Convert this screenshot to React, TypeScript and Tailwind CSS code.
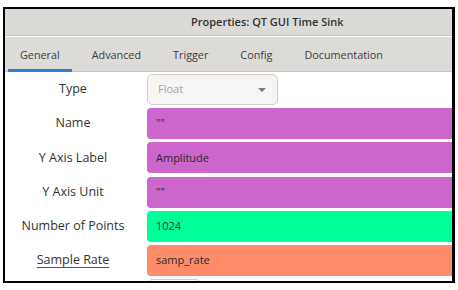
import { useState } from 'react';

type Row = {
  label: string;
  value: string;
  color?: string;
  select?: boolean;
  underline?: boolean;
};

const rows: Row[] = [
  { label: 'Type', value: 'Float', select: true },
  { label: 'Name', value: '""', color: 'bg-[#cc66cc]' },
  { label: 'Y Axis Label', value: 'Amplitude', color: 'bg-[#cc66cc]' },
  { label: 'Y Axis Unit', value: '""', color: 'bg-[#cc66cc]' },
  { label: 'Number of Points', value: '1024', color: 'bg-[#00ff99]' },
  { label: 'Sample Rate', value: 'samp_rate', color: 'bg-[#ff8c69]', underline: true },
];

const tabs = ['General', 'Advanced', 'Trigger', 'Config', 'Documentation'];

export default function App() {
  const [active, setActive] = useState(0);

  return (
    <div className="w-[458px] h-[290px] bg-white font-['Open_Sans',sans-serif] text-[#2e3436] overflow-hidden">
      <div className="ml-[3px] mt-[7px] w-[452px] h-[276px] border-2 border-r-[3px] border-black overflow-hidden flex flex-col">
        <div className="h-[27px] shrink-0 bg-[#dcdad7] border-b border-[#c6c3bf] flex items-center pl-[186px] text-[11px] font-semibold text-[#2e3436]">
          Properties: QT GUI Time Sink
        </div>
        <div className="h-px shrink-0 bg-white" />
        <div className="h-[35px] shrink-0 bg-[#dddbd8] border-b border-[#cac7c3] flex pl-[-1px]">
          {tabs.map((t, i) => (
            <button
              key={t}
              onClick={() => setActive(i)}
              className="relative px-4 first:pl-[15px] text-[10.8px] text-[#3d3d3d] leading-none pt-[2px]"
            >
              {t}
              {active === i && (
                <span className="absolute left-[3px] right-[4px] bottom-[-1px] h-[3px] bg-[#2f7ad8]" />
              )}
            </button>
          ))}
        </div>
        <div className="flex flex-col gap-[3.2px] pt-[2px]">
          {rows.map((r) => (
            <div key={r.label} className="flex h-[31px] shrink-0">
              <div className="w-[136px] mr-[6px] shrink-0 flex items-center justify-center text-[12.5px] text-[#333]">
                <span className={r.underline ? 'underline underline-offset-[3px] decoration-[#555]' : ''}>
                  {r.label}
                </span>
              </div>
              {r.select ? (
                <div className="w-[131px] h-[31px] rounded-[5px] border border-[#d3cec9] bg-[#f6f5f4] flex items-center justify-between pl-[10px] pr-[10px] text-[11px] text-[#a3a3a3]">
                  <span>{r.value}</span>
                  <svg width="10" height="6" viewBox="0 0 10 6">
                    <path d="M1 1 L9 1 L5 5 Z" fill="#7b7b7b" />
                  </svg>
                </div>
              ) : (
                <div className={`w-[340px] shrink-0 h-[31px] rounded-[4px] ${r.color} flex items-center pl-[9px] text-[11px] text-[#2a2a2a]`}>
                  {r.value}
                </div>
              )}
            </div>
          ))}
          <div className="flex h-[31px] shrink-0">
            <div className="w-[142px] shrink-0" />
            <div className="w-[54px] h-[31px] rounded-[5px] border border-[#d3cec9] bg-white" />
          </div>
        </div>
      </div>
    </div>
  );
}
